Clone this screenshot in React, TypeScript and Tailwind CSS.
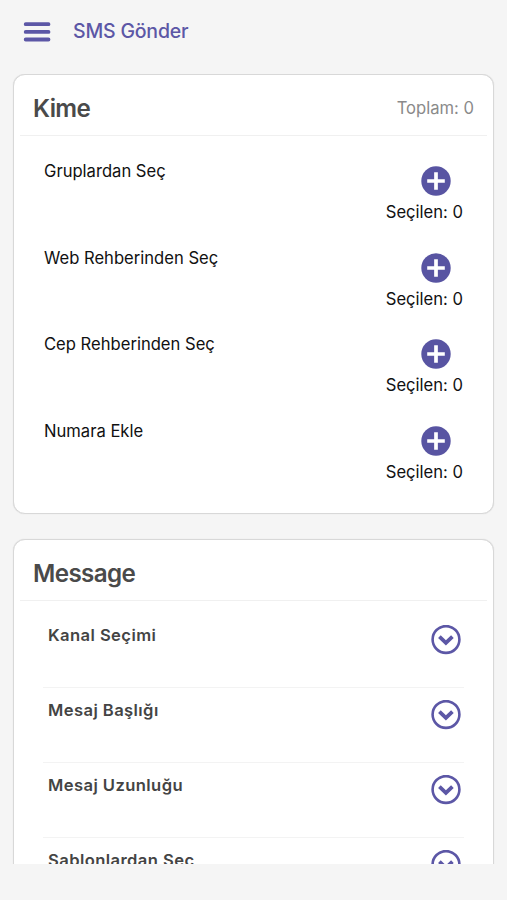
import type { ReactNode } from 'react';

const RECIPIENT_SOURCES = [
  { label: 'Gruplardan Seç', selected: 0 },
  { label: 'Web Rehberinden Seç', selected: 0 },
  { label: 'Cep Rehberinden Seç', selected: 0 },
  { label: 'Numara Ekle', selected: 0 },
];

const MESSAGE_OPTIONS = ['Kanal Seçimi', 'Mesaj Başlığı', 'Mesaj Uzunluğu', 'Şablonlardan Seç'];

function MenuIcon() {
  return (
    <svg viewBox="0 0 28 20" className="h-5 w-7" fill="none" stroke="currentColor" strokeWidth="3.8" strokeLinecap="round">
      <path d="M2.7 2.2h22.8M2.7 9.9h22.8M2.7 17.5h22.8" />
    </svg>
  );
}

function PlusCircleIcon() {
  return (
    <svg viewBox="0 0 30 30" className="size-[30px]">
      <circle cx="15" cy="15" r="14.7" fill="currentColor" />
      <path d="M15 6.2v17.6M6.2 15h17.6" stroke="white" strokeWidth="3.7" />
    </svg>
  );
}

function ChevronCircleIcon() {
  return (
    <svg viewBox="0 0 30 30" className="size-[30px]" fill="none" stroke="currentColor">
      <circle cx="15" cy="14.5" r="13.4" strokeWidth="2.6" />
      <path d="M8.4 11.7l6.5 6.2 6.5-6.2" strokeWidth="3.8" />
    </svg>
  );
}

function Card({ title, extra, children }: { title: string; extra?: ReactNode; children: ReactNode }) {
  return (
    <section className="shrink-0 rounded-xl border border-[#d8d8d8] bg-white px-1.5 shadow-[0_0_1px_#cfcfcf]">
      <div className="flex h-[60.5px] items-center justify-between border-b border-[#f0f0f0] pt-2 pr-[13px] pl-[13px]">
        <h2 className="text-[24.2px] font-semibold tracking-[-0.025em] text-[#4a4a4a]">{title}</h2>
        {extra}
      </div>
      {children}
    </section>
  );
}

export default function App() {
  return (
    <div className="flex h-[900px] w-[507px] flex-col overflow-hidden bg-[#f5f5f5] pb-9 font-['Inter','Liberation_Sans',sans-serif]">
      {/* Header */}
      <header className="flex h-[74px] shrink-0 items-start gap-[22px] pl-[23px] text-[#5c57a6]">
        <button type="button" aria-label="Menü" className="mt-[22px]">
          <MenuIcon />
        </button>
        <h1 className="mt-4 text-[19.5px] leading-[30px] font-medium tracking-[-0.01em]">SMS Gönder</h1>
      </header>

      <main className="flex min-h-0 flex-1 flex-col gap-[25px] overflow-hidden px-[13px]">
        {/* Recipients */}
        <Card title="Kime" extra={<span className="text-[16.6px] text-[#8a8a8a]">Toplam: 0</span>}>
          <ul className="pt-[25.4px] pr-6 pb-[5.6px] pl-6">
            {RECIPIENT_SOURCES.map((source) => (
              <li key={source.label} className="flex h-[86.7px] justify-between text-[16.6px] leading-5 text-[#111]">
                <span>{source.label}</span>
                <div className="flex flex-col items-end pt-[5px]">
                  <button type="button" aria-label={source.label} className="mr-3 text-[#5854a2]">
                    <PlusCircleIcon />
                  </button>
                  <span className="mt-1.5">Seçilen: {source.selected}</span>
                </div>
              </li>
            ))}
          </ul>
        </Card>

        {/* Message settings */}
        <Card title="Message">
          <ul className="px-[23px] pt-3">
            {MESSAGE_OPTIONS.map((option) => (
              <li key={option} className="flex h-[75px] items-start justify-between border-b border-[#f3f3f3] pt-[12.5px] pr-[3px] pl-[5px]">
                <span className="text-[16.6px] leading-5 font-semibold tracking-[0.025em] text-[#444]">{option}</span>
                <button type="button" aria-label={option} className="text-[#5c57a6]">
                  <ChevronCircleIcon />
                </button>
              </li>
            ))}
          </ul>
        </Card>
      </main>
    </div>
  );
}
